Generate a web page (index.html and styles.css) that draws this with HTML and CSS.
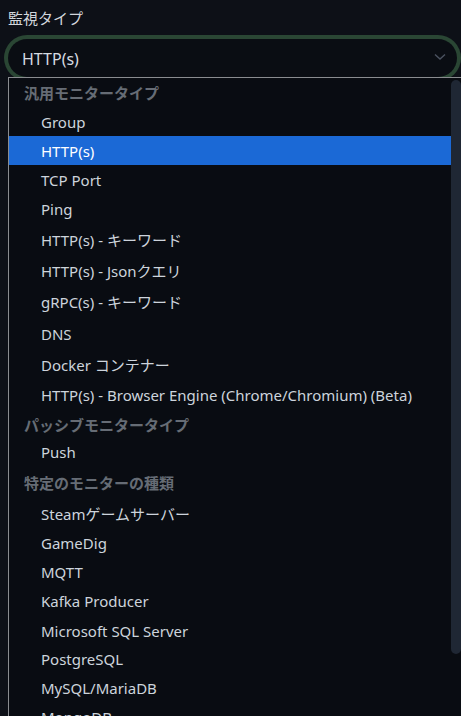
FILE: index.html
```html
<!DOCTYPE html>
<html lang="ja">
<head>
<meta charset="utf-8">
<title>監視タイプ</title>
<link rel="stylesheet" href="styles.css">
</head>
<body>
<div class="field">
  <label class="label">監視タイプ</label>
  <div class="select">
    <span class="value">HTTP(s)</span>
    <svg class="chev" width="12" height="8" viewBox="0 0 12 8"><path d="M1 1.5 L6 6 L11 1.5" fill="none" stroke="#4b5260" stroke-width="1.4"/></svg>
  </div>
  <div class="popup">
    <div class="list">
      <div class="hdr h29">汎用モニタータイプ</div>
      <div class="opt h29">Group</div>
      <div class="opt h29 sel">HTTP(s)</div>
      <div class="opt h29">TCP Port</div>
      <div class="opt h31">Ping</div>
      <div class="opt h31">HTTP(s) - キーワード</div>
      <div class="opt h31">HTTP(s) - Jsonクエリ</div>
      <div class="opt h32">gRPC(s) - キーワード</div>
      <div class="opt h31">DNS</div>
      <div class="opt h30">Docker コンテナー</div>
      <div class="opt h30">HTTP(s) - Browser Engine (Chrome/Chromium) (Beta)</div>
      <div class="hdr h27">パッシブモニタータイプ</div>
      <div class="opt h31">Push</div>
      <div class="hdr h31">特定のモニターの種類</div>
      <div class="opt h29">Steamゲームサーバー</div>
      <div class="opt h29">GameDig</div>
      <div class="opt h29">MQTT</div>
      <div class="opt h30">Kafka Producer</div>
      <div class="opt h28">Microsoft SQL Server</div>
      <div class="opt h29">PostgreSQL</div>
      <div class="opt h29">MySQL/MariaDB</div>
      <div class="opt h29">MongoDB</div>
    </div>
    <div class="scrollbar"><div class="thumb"></div></div>
  </div>
</div>
</body>
</html>
```
FILE: styles.css
```css
html, body {
  margin: 0;
  padding: 0;
  height: 100%;
  overflow: hidden;
}
body {
  background: #0d1017;
  font-family: "Noto Sans", "Noto Sans CJK JP", sans-serif;
  color: #cfd5dc;
}
.field {
  position: relative;
  padding: 8px 4px 0 8px;
}
.label {
  display: block;
  font-size: 15px;
  line-height: 20px;
  color: #d2d6dc;
}
.select {
  margin-top: 11px;
  height: 38px;
  box-sizing: border-box;
  border-radius: 19px;
  background: #0a0d13;
  box-shadow: 0 0 0 4px #2a4634;
  display: flex;
  align-items: center;
  justify-content: space-between;
  padding: 2px 11px 0 14px;
}
.value {
  font-size: 16px;
  color: #d6dbe1;
}
.chev {
  display: block;
  margin-top: -4px;
}
.popup {
  position: absolute;
  left: 8px;
  top: 77px;
  right: 0;
  height: 700px;
  background: #090c12;
  border-top: 1px solid #8a8c90;
  border-left: 1px solid #8a8c90;
  display: flex;
}
.list {
  flex: 1;
  min-width: 0;
}
.opt, .hdr {
  box-sizing: border-box;
  font-size: 15px;
  line-height: 20px;
  padding-top: 5px;
  white-space: nowrap;
}
.opt {
  padding-left: 32px;
  color: #cdd4dc;
}
.hdr {
  padding-left: 15px;
  font-weight: bold;
  color: #666c75;
}
.opt.sel {
  background: #1b69d6;
  color: #ffffff;
}
.h27 { height: 27px; }
.h28 { height: 28px; }
.h29 { height: 29px; }
.h30 { height: 30px; }
.h31 { height: 31px; }
.h32 { height: 32px; }
.scrollbar {
  width: 10px;
  flex: none;
  padding-top: 2px;
}
.thumb {
  height: 574px;
  border-radius: 5px;
  background: #1f2734;
}
```
